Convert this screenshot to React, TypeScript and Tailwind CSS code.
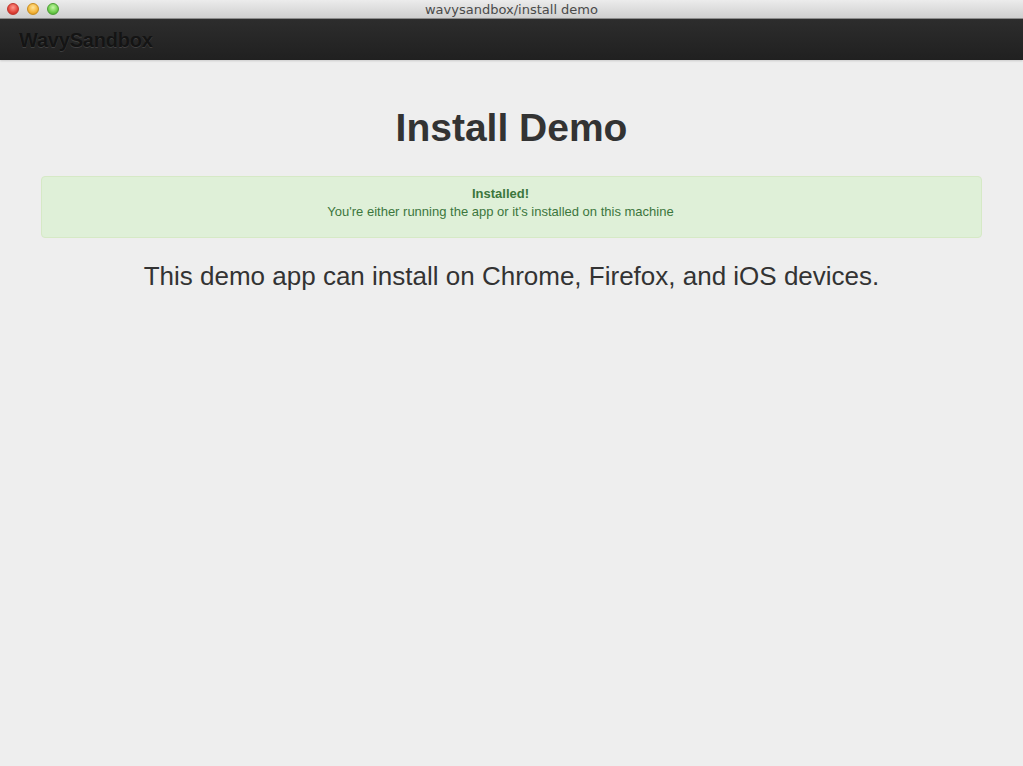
import React from 'react';

const font = { fontFamily: '"Liberation Sans", Arial, sans-serif' };

const TitleBar: React.FC = () => (
  <div className="relative flex h-[19px] items-center justify-center border-b border-[#8c8c8c] bg-gradient-to-b from-[#ececec] to-[#cfcfcf]">
    <div className="absolute left-[7px] top-[3px] flex gap-[8px]">
      <span className="h-[12px] w-[12px] rounded-full border border-[#c0342c] bg-[radial-gradient(circle_at_50%_35%,#ff9a8f,#e0443a_60%,#b8251c)]" />
      <span className="h-[12px] w-[12px] rounded-full border border-[#c88d1e] bg-[radial-gradient(circle_at_50%_35%,#ffe59a,#f4b43a_60%,#cf8a14)]" />
      <span className="h-[12px] w-[12px] rounded-full border border-[#4c9d36] bg-[radial-gradient(circle_at_50%_35%,#c6f7a8,#6ccc4a_60%,#3e9a2a)]" />
    </div>
    <span className="text-[13px] leading-none text-[#4a4a4a]" style={{ fontFamily: '"DejaVu Sans", "Liberation Sans", sans-serif' }}>
      wavysandbox/install demo
    </span>
  </div>
);

const Navbar: React.FC = () => (
  <div className="flex h-[41px] items-center bg-gradient-to-b from-[#2d2d2d] to-[#202020] px-[19px] shadow-[0_1px_2px_rgba(0,0,0,0.15)]">
    <span className="text-[20px] font-bold tracking-[-0.2px] text-[#141414] [text-shadow:0_1px_0_rgba(255,255,255,0.12)]">
      WavySandbox
    </span>
  </div>
);

export default function App() {
  return (
    <div className="flex h-[766px] w-[1023px] flex-col overflow-hidden bg-[#eeeeee]" style={font}>
      <TitleBar />
      <Navbar />
      <div className="flex flex-col items-center px-[41px] pt-[43px]">
        <h1 className="text-[39px] font-bold leading-[50px] text-[#333333]">Install Demo</h1>
        <div className="mt-[23px] w-full rounded-[4px] border border-[#d6e9c6] bg-[#dff0d8] pb-[16px] pl-[15px] pr-[37px] pt-[8px] text-center text-[13px] leading-[18px] text-[#3c763d]">
          <div className="font-bold">Installed!</div>
          <div>You're either running the app or it's installed on this machine</div>
        </div>
        <p className="mt-[22px] text-[26px] leading-[32px] text-[#333333]">
          This demo app can install on Chrome, Firefox, and iOS devices.
        </p>
      </div>
    </div>
  );
}
